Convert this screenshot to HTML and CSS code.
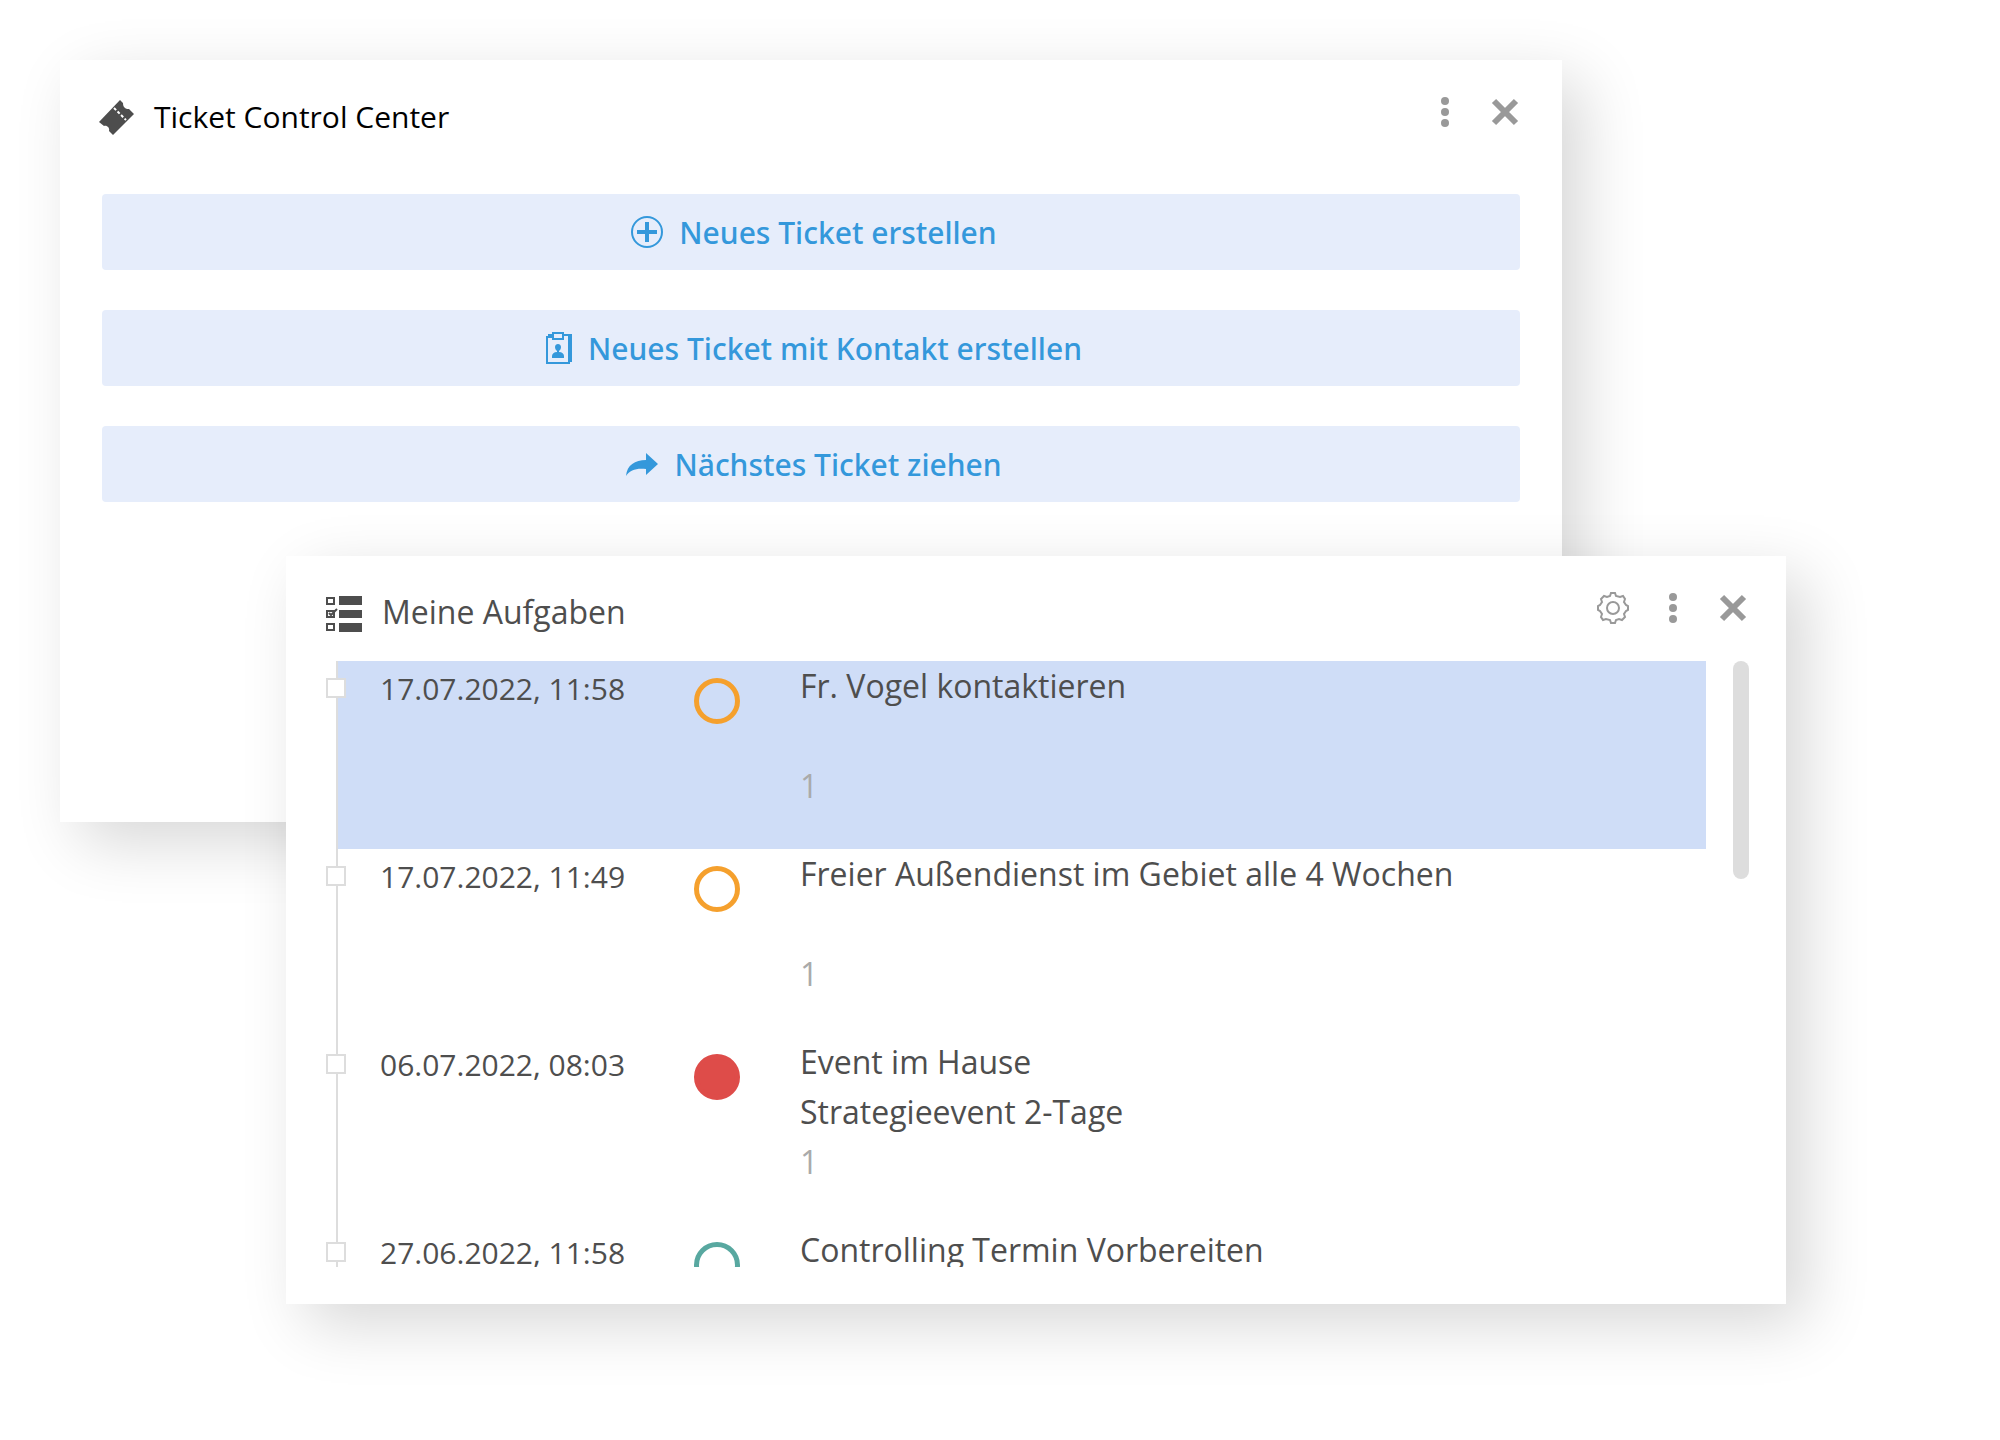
FILE: index.html
```html
<!DOCTYPE html>
<html lang="de">
<head>
    <meta charset="utf-8">
    <meta name="viewport" content="width=device-width, initial-scale=1.0">
    <title>Ticket Control Center</title>
    <link rel="stylesheet" href="styles.css">
</head>
<body>
<main class="stage">
    <section class="panel tickets">
        <header class="head">
            <svg class="head-icon" viewBox="0 0 36 36">
                <path fill="#4d4d4d" d="M22 0l3 3c0 4 2 6 6 6l5 5-21 21-4-4c1-3-2-6-5-5l-5-4z"/>
                <path stroke="#fff" stroke-width="2" stroke-dasharray="3 2" d="M16 8l12 12"/>
            </svg>
            <h2>Ticket Control Center</h2>
            <div class="tools">
                <button type="button" aria-label="Menü">
                    <svg viewBox="0 0 32 32"><circle cx="16" cy="5" r="4"/><circle cx="16" cy="16" r="4"/><circle cx="16" cy="27" r="4"/></svg>
                </button>
                <button type="button" aria-label="Schließen">
                    <svg viewBox="0 0 32 32"><path class="cross" d="M5 5l22 22M27 5L5 27"/></svg>
                </button>
            </div>
        </header>
        <div class="actions">
            <button type="button" class="action">
                <svg viewBox="0 0 32 32" width="32" height="32">
                    <circle cx="16" cy="16" r="15" fill="none" stroke="currentColor" stroke-width="2"/>
                    <path d="M6 14h8V6h4v8h8v4h-8v8h-4v-8H6z"/>
                </svg>
                Neues Ticket erstellen
            </button>
            <button type="button" class="action">
                <svg viewBox="0 0 26 32" width="26" height="32">
                    <path fill-rule="evenodd" d="M0 4h2V2h4V0h12v2h8v28h-2v2H0zM2 6v24h20V4h-4v4H6V6zM8 2v4h8V2z"/>
                    <path d="M9 15c0-4 6-4 6 0 0 2-1 3-2 4v1c3 0 5 2 5 4v2H6v-2c0-2 2-4 5-4v-1c-1-1-2-2-2-4z"/>
                </svg>
                Neues Ticket mit Kontakt erstellen
            </button>
            <button type="button" class="action">
                <svg viewBox="0 0 32 32" width="32" height="32">
                    <path d="M20 5l12 11-12 11v-6C10 20 4 22 0 28 1 17 9 12 20 12z"/>
                </svg>
                Nächstes Ticket ziehen
            </button>
        </div>
    </section>

    <section class="panel tasks">
        <header class="head">
            <svg class="head-icon" viewBox="0 0 36 36">
                <path fill="#4d4d4d" d="M13 0h23v9H13zM13 14h23v8H13zM13 27h23v9H13z"/>
                <path fill="none" stroke="#4d4d4d" stroke-width="2" d="M1 2h7v6H1zM1 15h7v6H1zM1 28h7v6H1zM3 17l2 2 6-6"/>
            </svg>
            <h2>Meine Aufgaben</h2>
            <div class="tools">
                <button type="button" aria-label="Einstellungen">
                    <svg viewBox="0 0 32 32">
                        <path class="gear" d="M14 1h4l1 3 4 1 3-1 2 3-1 3 2 3 2 1v4l-2 1-2 3 1 3-3 3-3-1-3 1-1 3h-4l-1-3-4-1-3 1-2-3 1-3-2-3-2-1v-4l2-1 2-3-1-3 3-3 3 1 3-1z"/>
                        <circle class="gear" cx="16" cy="16" r="6"/>
                    </svg>
                </button>
                <button type="button" aria-label="Menü">
                    <svg viewBox="0 0 32 32"><circle cx="16" cy="5" r="4"/><circle cx="16" cy="16" r="4"/><circle cx="16" cy="27" r="4"/></svg>
                </button>
                <button type="button" aria-label="Schließen">
                    <svg viewBox="0 0 32 32"><path class="cross" d="M5 5l22 22M27 5L5 27"/></svg>
                </button>
            </div>
        </header>
        <div class="scroller">
            <ul class="list">
                <li class="task selected">
                    <time>17.07.2022, 11:58</time>
                    <span class="state open"></span>
                    <div class="text">
                        <p>Fr. Vogel kontaktieren</p>
                        <p></p>
                        <p class="count">1</p>
                    </div>
                </li>
                <li class="task">
                    <time>17.07.2022, 11:49</time>
                    <span class="state open"></span>
                    <div class="text">
                        <p>Freier Außendienst im Gebiet alle 4 Wochen</p>
                        <p></p>
                        <p class="count">1</p>
                    </div>
                </li>
                <li class="task">
                    <time>06.07.2022, 08:03</time>
                    <span class="state urgent"></span>
                    <div class="text">
                        <p>Event im Hause</p>
                        <p>Strategieevent 2-Tage</p>
                        <p class="count">1</p>
                    </div>
                </li>
                <li class="task">
                    <time>27.06.2022, 11:58</time>
                    <span class="state planned"></span>
                    <div class="text">
                        <p>Controlling Termin Vorbereiten</p>
                    </div>
                </li>
            </ul>
            <div class="scrollbar"></div>
        </div>
    </section>
</main>
</body>
</html>
```

FILE: styles.css
```css
*, *::before {
    box-sizing: border-box;
}

body {
    margin: 0;
    background: #fff;
    font-family: "Open Sans", "Noto Sans", sans-serif;
    font-size: 32px;
    color: #4e4e4e;
}

h2, p, ul {
    margin: 0;
    padding: 0;
}

button {
    border: 0;
    padding: 0;
    font-family: inherit;
    cursor: pointer;
}

svg {
    display: block;
    fill: currentColor;
}

.stage {
    padding: 60px 0 136px;
}

.panel {
    width: 75%;
    background: #fff;
    box-shadow: 20px 20px 60px rgba(0, 0, 0, 0.16);
}

.tickets {
    width: 75.1%;
    min-height: 762px;
    margin-left: 3%;
    padding: 36px 42px;
}

/* overlaps the ticket panel */
.tasks {
    position: relative;
    margin-top: -266px;
    margin-left: 286px;
    padding: 36px 37px 37px 40px;
}

.head {
    display: flex;
    align-items: flex-start;
    gap: 20px;
}

.tickets .head {
    margin: 0 -1px 0 -4px;
}

.head-icon {
    width: 36px;
    height: 36px;
    margin-top: 4px;
}

.head h2 {
    font-size: 32px;
    font-weight: 400;
    line-height: 40px;
}

.tickets h2 {
    font-size: 30px;
    line-height: 42px;
    color: #000;
}

.tools {
    display: flex;
    gap: 28px;
    margin-left: auto;
}

.tools button {
    width: 32px;
    height: 32px;
    background: none;
    color: #999;
}

.cross {
    fill: none;
    stroke: currentColor;
    stroke-width: 6;
}

.gear {
    fill: none;
    stroke: currentColor;
    stroke-width: 2;
}

.actions {
    display: flex;
    flex-direction: column;
    gap: 40px;
    margin-top: 56px;
}

.action {
    display: flex;
    align-items: center;
    justify-content: center;
    gap: 16px;
    height: 76px;
    padding-left: 6px;
    border-radius: 4px;
    background: #e6edfb;
    color: #3498db;
    font-family: "Noto Sans", "Open Sans", sans-serif;
    font-size: 30px;
    font-weight: 500;
}

.scroller {
    display: flex;
    gap: 27px;
    margin-top: 29px;
}

.list {
    flex: 1;
    height: 606px;
    padding-left: 10px;
    overflow: hidden;
    list-style: none;
}

.task {
    position: relative;
    display: grid;
    grid-template-columns: 314px 106px 1fr;
    height: 188px;
    padding-left: 42px;
    border-left: 2px solid #ddd;
    line-height: 50px;
}

/* timeline marker */
.task::before {
    content: "";
    position: absolute;
    top: 17px;
    left: -12px;
    width: 20px;
    height: 20px;
    border: 2px solid #ddd;
    background: #fff;
}

.selected {
    background: #cfddf7;
}

.task time {
    padding-top: 3px;
    font-size: 30px;
}

.task p {
    min-height: 50px;
}

.task .count {
    color: #aaa;
}

.state {
    width: 46px;
    height: 46px;
    margin-top: 17px;
    border: 5px solid;
    border-radius: 50%;
}

.open {
    color: #f5a02d;
}

.urgent {
    color: #de4c49;
    background: #de4c49;
}

.planned {
    color: #58a8a0;
}

.scrollbar {
    width: 16px;
    height: 218px;
    border-radius: 8px;
    background: #ddd;
}
```
